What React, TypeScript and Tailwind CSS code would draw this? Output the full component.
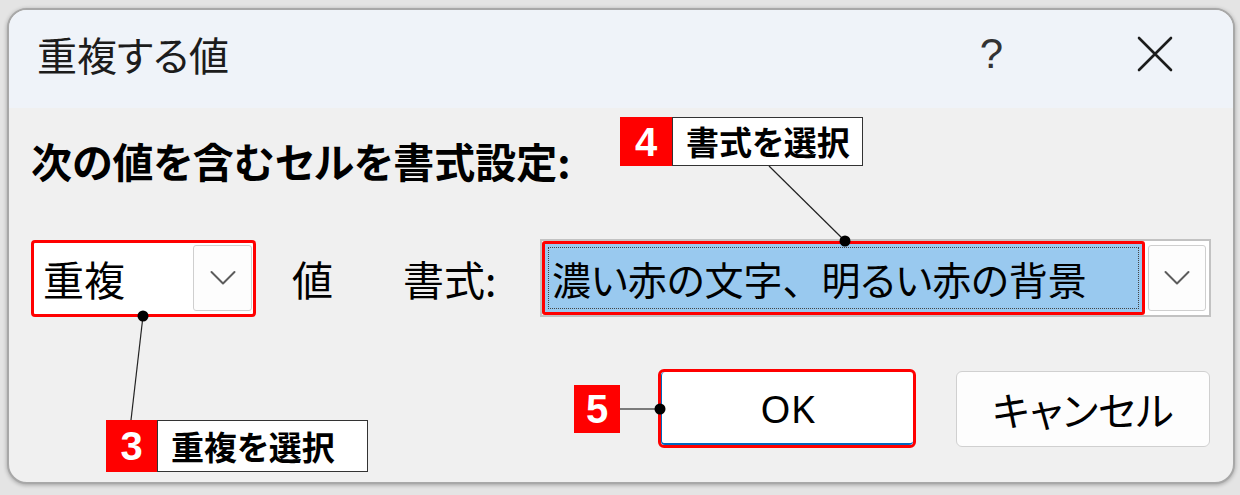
import React from "react";

function Chevron() {
  return (
    <svg width="26" height="16" viewBox="0 0 26 16" fill="none">
      <path d="M1.5 2 L13 13.5 L24.5 2" stroke="#5c5c5c" strokeWidth="2" strokeLinecap="round" strokeLinejoin="round" />
    </svg>
  );
}

export default function App() {
  return (
    <div className="relative w-[1240px] h-[495px] bg-[#e4e4e4] pt-[8px] pl-[7px] pr-[5px] pb-[11px] font-['Noto_Sans_CJK_JP','Noto_Sans',sans-serif] [font-feature-settings:'palt'] text-black">
      <div className="flex h-full flex-col overflow-hidden rounded-[20px] border-2 border-[#a8a8a8] bg-[#f0f0f0] shadow-[0_1px_4px_rgba(0,0,0,0.3)]">
        {/* title bar */}
        <div className="flex h-[98px] shrink-0 items-center bg-[#eff3f9] pb-[10px] pl-[28px] pr-[60px]">
          <span className="text-[40px] leading-none text-[#1c1c1c]">重複する値</span>
          <span className="ml-auto font-['Liberation_Sans',sans-serif] text-[42px] font-light leading-none text-[#333]">?</span>
          <svg className="ml-[134px]" width="36" height="36" viewBox="0 0 36 36" fill="none">
            <path d="M2 2 L34 34 M34 2 L2 34" stroke="#1c1c1c" strokeWidth="2.6" strokeLinecap="round" />
          </svg>
        </div>
        {/* body */}
        <div className="flex flex-1 flex-col pl-[22px] pr-[23px]">
          <div className="mt-[32px] text-[41px] font-bold leading-none text-black">次の値を含むセルを書式設定:</div>

          <div className="mt-[58px] flex h-[78px] items-center">
            <div className="flex h-[77px] w-[225px] items-center rounded-[4px] border-[3px] border-[#ff0000] bg-white pl-[9px] pr-[1px]">
              <span className="text-[41px] leading-none">重複</span>
              <div className="ml-auto flex h-[66px] w-[59px] items-center justify-center rounded-[3px] border border-[#cfcfcf] bg-[#fdfdfd]">
                <Chevron />
              </div>
            </div>
            <span className="ml-[36px] text-[41px] leading-none">値</span>
            <span className="ml-[70px] text-[41px] leading-none">書式:</span>
            <div className="ml-auto mr-[-1px] flex h-[78px] w-[671px] items-center border-2 border-[#c2c2c2] bg-white">
              <div className="h-full w-[603px] rounded-[3px] border-[3px] border-[#ff0000] bg-[#99c9ef] p-[3px]">
                <div className="flex h-full items-center border border-dotted border-[#444] pl-[3px]">
                  <span className="text-[39px] leading-none">
                    濃い赤の文字<span className="[font-feature-settings:normal]">、</span>明るい赤の背景
                  </span>
                </div>
              </div>
              <div className="ml-[3px] flex h-[66px] w-[58px] items-center justify-center rounded-[3px] border border-[#cfcfcf] bg-[#fdfdfd]">
                <Chevron />
              </div>
            </div>
          </div>

          <div className="mt-[52px] flex items-center justify-end">
            <div className="h-[79px] w-[258px] rounded-[6px] border-[3px] border-[#ff0000] bg-white">
              <div className="flex h-full items-center justify-center rounded-[4px] border-b-2 border-l border-[#0067c0]">
                <span className="font-['Noto_Sans',sans-serif] text-[39px] leading-none">OK</span>
              </div>
            </div>
            <div className="ml-[40px] flex h-[76px] w-[254px] items-center justify-center rounded-[6px] border border-[#d0d0d0] bg-[#fdfdfd]">
              <span className="text-[40px] leading-none">キャンセル</span>
            </div>
          </div>
        </div>
      </div>

      {/* connector lines */}
      <svg className="pointer-events-none absolute left-0 top-0" width="1240" height="495">
        <line x1="143" y1="316" x2="131" y2="420" stroke="#222" strokeWidth="1.2" />
        <circle cx="143" cy="316" r="5.5" fill="#000" />
        <line x1="769" y1="166" x2="845" y2="241" stroke="#222" strokeWidth="1.2" />
        <circle cx="845" cy="241" r="5.5" fill="#000" />
        <line x1="620" y1="409" x2="660" y2="409" stroke="#555" strokeWidth="1.5" />
        <circle cx="660" cy="409" r="5.5" fill="#000" />
      </svg>

      {/* callout 4 */}
      <div className="absolute left-[620px] top-[117px] flex h-[49px]">
        <div className="flex w-[52px] items-center justify-center bg-[#ff0000] font-['Liberation_Sans',sans-serif] text-[40px] font-bold leading-none text-white">4</div>
        <div className="flex w-[191px] items-center border border-[#333] bg-white pl-[13px] text-[33px] font-bold leading-none">書式を選択</div>
      </div>
      {/* callout 3 */}
      <div className="absolute left-[106px] top-[420px] flex h-[52px]">
        <div className="flex w-[51px] items-center justify-center bg-[#ff0000] font-['Liberation_Sans',sans-serif] text-[40px] font-bold leading-none text-white">3</div>
        <div className="flex w-[211px] items-center border border-[#333] bg-white pl-[13px] text-[33px] font-bold leading-none">重複を選択</div>
      </div>
      {/* callout 5 */}
      <div className="absolute left-[574px] top-[385px] flex h-[48px] w-[46px] items-center justify-center bg-[#ff0000] font-['Liberation_Sans',sans-serif] text-[40px] font-bold leading-none text-white">5</div>
    </div>
  );
}
